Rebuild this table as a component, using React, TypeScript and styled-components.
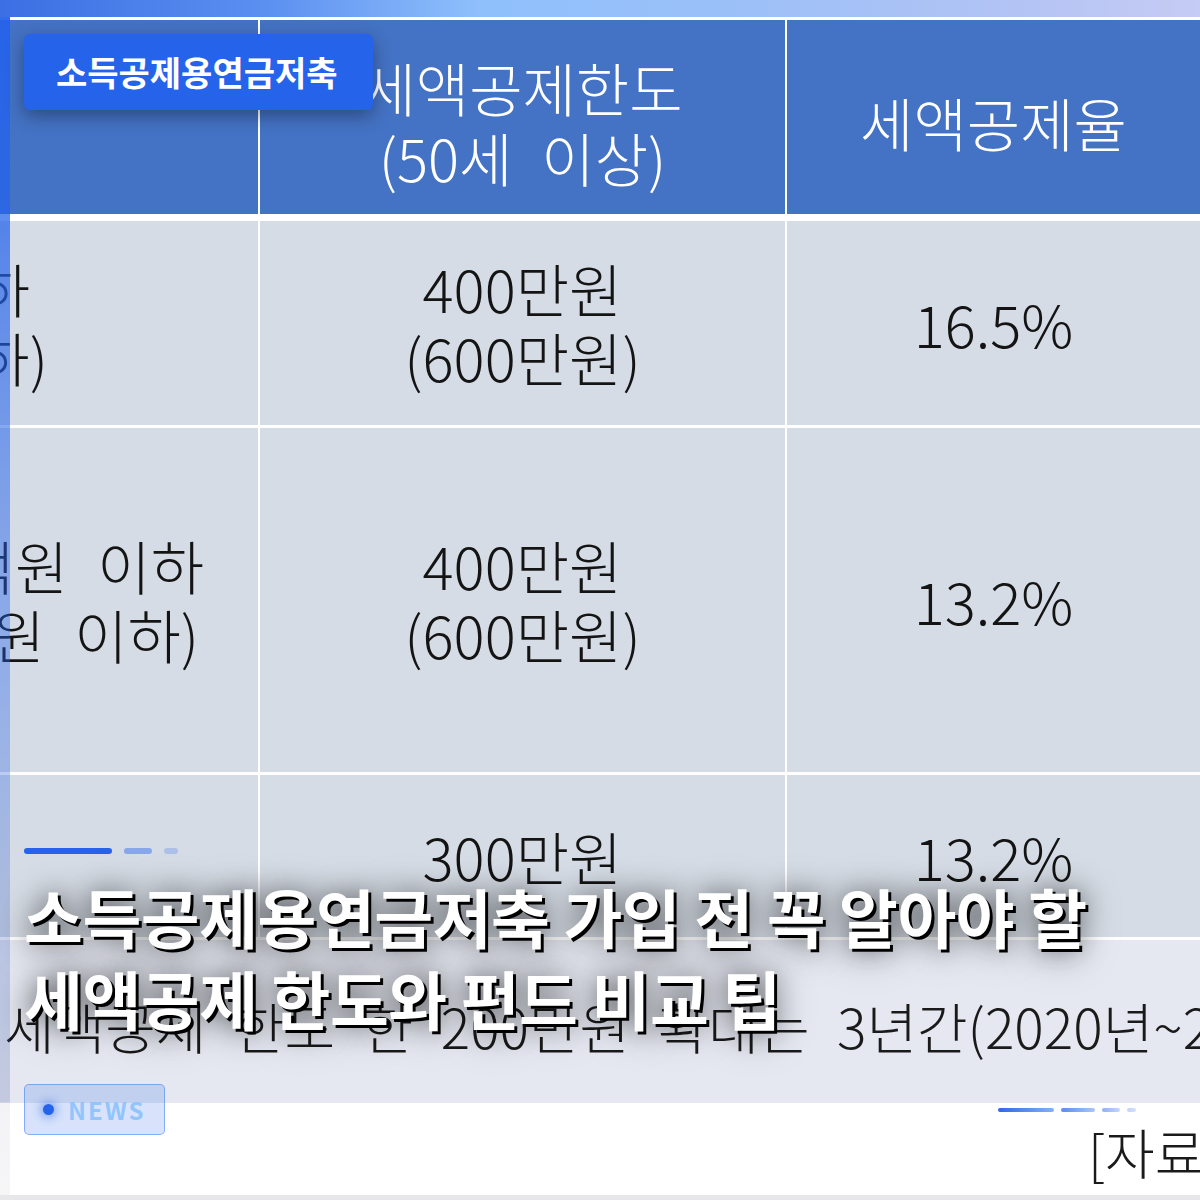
import React from "react";
import styled, { createGlobalStyle } from "styled-components";

const FONT = `"Noto Sans CJK KR", "Noto Sans", sans-serif`;

const GlobalStyle = createGlobalStyle`
  html, body { margin: 0; padding: 0; background: #fff; }
  #root { width: 1200px; height: 1200px; }
  * { box-sizing: border-box; }
`;

const Card = styled.div`
  position: relative;
  width: 1200px;
  height: 1200px;
  overflow: hidden;
  background: #fff;
  font-family: ${FONT};
`;

/* ---------- background picture: cropped table ---------- */
const Scene = styled.div`
  display: flex;
  flex-direction: column;
  height: 100%;
`;

const TopBand = styled.div`
  height: 17px;
  flex-shrink: 0;
  background: linear-gradient(
    90deg,
    #3b6fe3 0%,
    #5b8ff0 22%,
    #8fc0fc 40%,
    #9cc0f8 62%,
    #b2c3f4 84%,
    #c6ccf4 100%
  );
`;

const Sheet = styled.div`
  flex: 1;
  display: flex;
  flex-direction: column;
  overflow: hidden;
`;

const TableGrid = styled.div`
  display: grid;
  grid-template-columns: 1026px 525px 413px;
  grid-template-rows: 198px 204px 344px 162px;
  gap: 3px 2px;
  padding: 3px 0;
  width: max-content;
  margin-left: -768px;
  align-self: flex-start;
  flex-shrink: 0;
  background: #fff;
`;

const HeadCell = styled.div`
  margin-bottom: 4px;
  padding-top: 10px;
  background: #4472c4;
  color: #fff;
  display: flex;
  align-items: center;
  justify-content: center;
  text-align: center;
  white-space: pre-line;
  font-size: 58px;
  font-weight: 300;
  line-height: 70px;
`;

const BodyCell = styled.div`
  background: #d6dce5;
  color: #141414;
  display: flex;
  align-items: center;
  justify-content: center;
  text-align: center;
  white-space: pre-line;
  font-size: 58px;
  font-weight: 300;
  line-height: 69px;
`;

const Note = styled.div`
  height: 163px;
  flex-shrink: 0;
  background: #e5e8f1;
  display: flex;
  align-items: center;
  padding: 6px 0 0 4px;
  color: #1a1a1a;
  font-size: 55px;
  font-weight: 300;
  white-space: nowrap;
`;

const Source = styled.div`
  flex: 1;
  display: flex;
  flex-direction: column;
  background: #fff;
`;

const SourceBars = styled.div`
  display: flex;
  gap: 7px;
  align-self: flex-end;
  margin: 5px 64px 0 0;
`;

const SourceBar = styled.span<{ $w: number; $from: string; $to: string }>`
  width: ${(p) => p.$w}px;
  height: 4px;
  border-radius: 2px;
  background: linear-gradient(90deg, ${(p) => p.$from}, ${(p) => p.$to});
`;

const SourceText = styled.div`
  margin: 10px 0 0 1088px;
  color: #1a1a1a;
  font-size: 54px;
  font-weight: 300;
  line-height: 60px;
  white-space: nowrap;
`;

const BottomLine = styled.div`
  height: 5px;
  flex-shrink: 0;
  background: #e7e7ea;
`;

/* ---------- overlays ---------- */
const EdgeStrip = styled.div`
  position: absolute;
  left: 0;
  top: 17px;
  bottom: 5px;
  width: 10px;
  background: linear-gradient(
    180deg,
    rgba(37, 99, 235, 0.95) 0%,
    rgba(37, 99, 235, 0.7) 20%,
    rgba(37, 99, 235, 0.5) 40%,
    rgba(37, 99, 235, 0.36) 58%,
    rgba(50, 90, 190, 0.24) 78%,
    rgba(60, 80, 150, 0.2) 92.1%,
    rgba(20, 20, 60, 0.05) 92.2%,
    rgba(20, 20, 60, 0.04) 100%
  );
`;

const Overlay = styled.div`
  position: absolute;
  inset: 0;
  display: flex;
  flex-direction: column;
  align-items: flex-start;
  padding: 34px 24px 65px;
`;

const Tag = styled.div`
  height: 76px;
  padding: 0 35px 0 32px;
  border-radius: 6px;
  background: #2563eb;
  color: #fff;
  font-size: 34px;
  font-weight: 700;
  line-height: 76px;
  white-space: nowrap;
  box-shadow: 0 6px 18px rgba(0, 0, 0, 0.35);
`;

const Spacer = styled.div`
  flex: 1;
`;

const Progress = styled.div`
  display: flex;
  gap: 12px;
  margin-bottom: 20px;
`;

const ProgressBar = styled.span<{ $w: number; $c: string }>`
  width: ${(p) => p.$w}px;
  height: 6px;
  border-radius: 3px;
  background: ${(p) => p.$c};
`;

const Title = styled.h1`
  margin: 0;
  color: #fff;
  font-size: 64px;
  font-weight: 700;
  line-height: 82px;
  letter-spacing: -0.5px;
  white-space: nowrap;
  text-shadow: 3px 3px 0 #000, 0 0 26px rgba(0, 0, 0, 0.55),
    0 4px 40px rgba(0, 0, 0, 0.35);
`;

const Badge = styled.div`
  margin-top: 46px;
  height: 51px;
  display: flex;
  align-items: center;
  gap: 14px;
  padding: 0 18px 0 18px;
  border: 1px solid rgba(59, 130, 246, 0.55);
  border-radius: 5px;
  background: rgba(37, 99, 235, 0.18);
`;

const Dot = styled.span`
  width: 11px;
  height: 11px;
  border-radius: 50%;
  background: #2563eb;
  box-shadow: 0 0 10px 3px rgba(37, 99, 235, 0.45);
`;

const BadgeText = styled.span`
  color: #93c5fd;
  font-size: 24px;
  font-weight: 700;
  letter-spacing: 2px;
  line-height: 1;
`;

const E = "\u2002";

const header = ["구분", "세액공제한도\n(50세" + E + "이상)", "세액공제율"];
const rows = [
  [
    "총급여" + E + "5,500만원" + E + "이하\n(종합소득" + E + "4천만원" + E + "이하)",
    "400만원\n(600만원)",
    "16.5%",
  ],
  [
    "총급여" + E + "5,500만원" + E + "초과" + E + "1.2억원" + E + "이하\n(종합소득" + E + "4천만원" + E + "초과" + E + "1억원" + E + "이하)",
    "400만원\n(600만원)",
    "13.2%",
  ],
  ["1.2억원" + E + "초과", "300만원", "13.2%"],
];

const progress = [
  { w: 88, c: "#2563eb" },
  { w: 28, c: "#88a7e8" },
  { w: 14, c: "#adc0ea" },
];

const sourceBars = [
  { w: 56, from: "#2f68e8", to: "#86b0f6" },
  { w: 34, from: "#5a8cf0", to: "#a9c6f8" },
  { w: 18, from: "#8fb0f3", to: "#c4d6fa" },
  { w: 9, from: "#c0d3fa", to: "#d3e0fb" },
];

export default function App() {
  return (
    <>
      <GlobalStyle />
      <Card>
        <Scene>
          <TopBand />
          <Sheet>
            <TableGrid>
              {header.map((h, i) => (
                <HeadCell key={i}>{h}</HeadCell>
              ))}
              {rows.map((r, ri) =>
                r.map((c, ci) => <BodyCell key={`${ri}-${ci}`}>{c}</BodyCell>)
              )}
            </TableGrid>
            <Note>
              {"세액공제" + E + "한도" + E + "한" + E + "200만원" + E + "확대는" + E + "3년간(2020년~2022년)"}
            </Note>
            <Source>
              <SourceBars>
                {sourceBars.map((b, i) => (
                  <SourceBar key={i} $w={b.w} $from={b.from} $to={b.to} />
                ))}
              </SourceBars>
              <SourceText>[자료: 국세청]</SourceText>
            </Source>
          </Sheet>
          <BottomLine />
        </Scene>

        <EdgeStrip />

        <Overlay>
          <Tag>소득공제용연금저축</Tag>
          <Spacer />
          <Progress>
            {progress.map((p, i) => (
              <ProgressBar key={i} $w={p.w} $c={p.c} />
            ))}
          </Progress>
          <Title>
            소득공제용연금저축 가입 전 꼭 알아야 할
            <br />
            세액공제 한도와 펀드 비교 팁
          </Title>
          <Badge>
            <Dot />
            <BadgeText>NEWS</BadgeText>
          </Badge>
        </Overlay>
      </Card>
    </>
  );
}
